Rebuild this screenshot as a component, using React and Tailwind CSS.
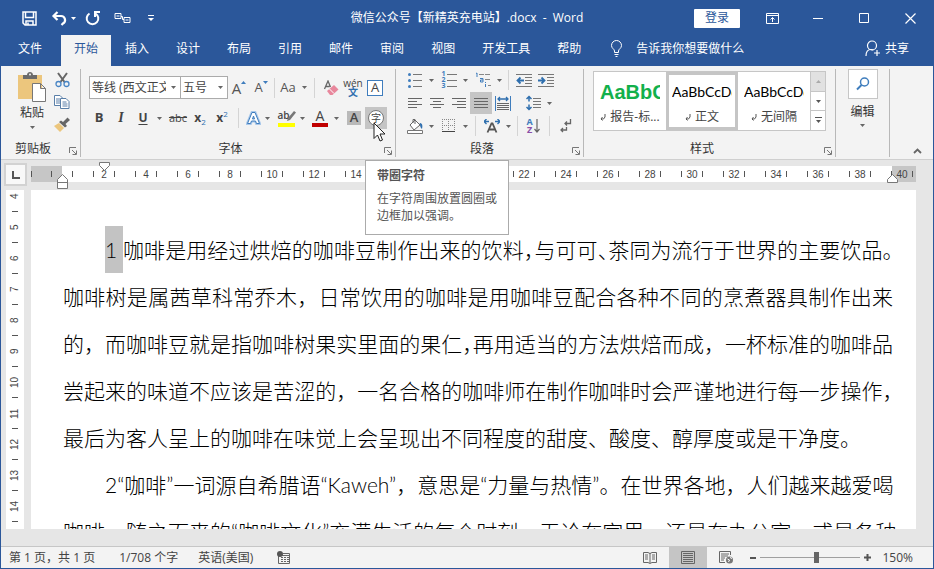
import React, { useState } from 'react';

const tabs = ['插入', '设计', '布局', '引用', '邮件', '审阅', '视图', '开发工具', '帮助'];
const rulerMarks = Array.from({ length: 21 }, (_, i) => i * 2);
const verticalMarks = [4, 5, 6, 7, 8, 9, 10, 11, 12, 13, 14];

const Svg = ({ w = 16, h = 16, children, className = '' }) => (
  <svg width={w} height={h} viewBox={`0 0 ${w} ${h}`} fill="none" className={`shrink-0 ${className}`} aria-hidden="true">
    {children}
  </svg>
);

const Caret = ({ label }) => (
  <button aria-label={label} className="flex h-[22px] w-[10px] shrink-0 items-center justify-center">
    <Svg w={5} h={3}><path d="M0 0h5L2.5 3z" fill="#666" /></Svg>
  </button>
);

const Tool = ({ label, children, active, className = 'w-[22px]' }) => (
  <button
    aria-label={label}
    className={`flex h-[22px] shrink-0 items-center justify-center ${className} ${active ? 'bg-[#c5c5c5]' : ''}`}
  >
    {children}
  </button>
);

const Divider = ({ className = 'mx-[5px]' }) => <div className={`h-[20px] w-px shrink-0 bg-[#d4d4d4] ${className}`} />;

const Group = ({ title, className = '', children, launcher = true }) => (
  <section aria-label={title} className={`flex h-[88px] shrink-0 flex-col border-r border-[#b8b8b8] ${className}`}>
    <div className="flex-1">{children}</div>
    <div className="flex h-[16px] items-center">
      <span className="flex-1 text-center leading-4">{launcher ? title : ''}</span>
      {launcher && (
        <button aria-label={`${title}设置`} className="flex w-[15px] justify-center pt-1">
          <Svg w={8} h={8}>
            <path d="M.5 6V.5H7M3 3l4 4M7.5 3.5v4h-4" stroke="#777" />
          </Svg>
        </button>
      )}
    </div>
  </section>
);

const Lines = ({ d }) => <Svg w={16} h={14}><path d={d} stroke="#666" /></Svg>;

const TitleBar = () => (
  <header className="flex h-[34px] shrink-0 items-center text-white">
    <div className="flex flex-1 basis-0 items-center">
      <button aria-label="保存" className="ml-[21px]">
        <Svg w={15} h={15}>
          <path d="M1 1h13v13H3l-2-2zM3.500 1v5.500h8V1M4 14v-4h7v4M6 14v-2.500" stroke="#fff" strokeWidth="1.500" />
        </Svg>
      </button>
      <button aria-label="撤消" className="ml-[14px]">
        <Svg w={17} h={15}>
          <path d="M6.500 1L2.500 5l4 4M3 5h7a4 4 0 0 1 2 7.500L10.500 14" stroke="#fff" strokeWidth="2.200" />
        </Svg>
      </button>
      <Svg w={5} h={3} className="ml-[3px]"><path d="M0 0h5L2.500 3z" fill="#fff" /></Svg>
      <button aria-label="恢复" className="ml-[9px]">
        <Svg w={16} h={16}>
          <path d="M4.500 3.500a5.800 5.800 0 1 0 6 0M10 7V2h5" stroke="#fff" strokeWidth="2" />
        </Svg>
      </button>
      <button aria-label="链接文本框" className="ml-[13px]">
        <Svg w={17} h={12}>
          <path d="M1 1.500h6v5H1zM2.500 4h3M10 5.500h6v5h-6zM11.500 8h3M7 4.500h1.500v3H10" stroke="#fff" />
        </Svg>
      </button>
      <button aria-label="自定义快速访问工具栏" className="ml-[17px]">
        <Svg w={6} h={7}><path d="M0 .5h6" stroke="#fff" /><path d="M0 3h6L3 6z" fill="#fff" /></Svg>
      </button>
    </div>
    <h1 className="whitespace-pre text-xs">微信公众号【新精英充电站】.docx  -  Word</h1>
    <div className="flex flex-1 basis-0 items-center justify-end">
      <button className="mr-[9px] h-[19px] w-[46px] rounded-[1px] bg-white text-xs leading-[18px] text-[#2b579a]">登录</button>
      <button aria-label="功能区显示选项" className="flex w-[46px] justify-center">
        <Svg w={13} h={11}><path d="M.5.5h12v10H.500zM.500 2.500h12M6.500 9V4.500M4.500 6.500l2-2 2 2" stroke="#fff" /></Svg>
      </button>
      <button aria-label="最小化" className="flex w-[46px] justify-center">
        <Svg w={10} h={10}><path d="M0 5.500h10" stroke="#fff" /></Svg>
      </button>
      <button aria-label="最大化" className="flex w-[46px] justify-center">
        <Svg w={10} h={10}><path d="M.5.5h9v9h-9z" stroke="#fff" /></Svg>
      </button>
      <button aria-label="关闭" className="flex w-[46px] justify-center">
        <Svg w={11} h={11}><path d="M.5.5l10 10M10.500.5l-10 10" stroke="#fff" strokeWidth="1.200" /></Svg>
      </button>
    </div>
  </header>
);

const TabBar = () => (
  <nav className="flex h-[31px] shrink-0 items-stretch gap-px text-xs text-white">
    <button className="ml-1 px-[13px] pb-1">文件</button>
    <button className="ml-[5px] bg-[#f3f3f3] px-[13px] pb-1 text-[#2b579a]">开始</button>
    {tabs.map((tab) => (
      <button key={tab} className="px-[13px] pb-1">{tab}</button>
    ))}
    <button className="ml-[15px] flex items-center gap-[13px] pb-1">
      <Svg w={13} h={17}>
        <path d="M4.500 12.500V11C4.500 9 1.500 8.500 1.500 5.500a5 5 0 0 1 10 0C11.500 8.500 8.500 9 8.500 11v1.500zM4.500 14.500h4M5.500 16.500h2" stroke="#fff" />
      </Svg>
      告诉我你想要做什么
    </button>
    <button className="ml-auto mr-[24px] flex items-center gap-1 pb-1">
      <Svg w={16} h={17}>
        <path d="M1 16c0-4 2-6.500 5-6.500 1 0 2 .2 2.500.6" stroke="#fff" strokeWidth="1.200" />
        <circle cx="7" cy="5.500" r="4.500" stroke="#fff" strokeWidth="1.200" />
        <path d="M12 10v6M9 13h6" stroke="#fff" strokeWidth="1.200" />
      </Svg>
      共享
    </button>
  </nav>
);

const ClipboardGroup = () => (
  <Group title="剪贴板" className="w-[80px]">
    <div className="flex">
      <button className="ml-[16px] flex w-[30px] flex-col items-center pt-[3px] leading-4">
        <Svg w={28} h={30}>
          <path d="M0 3h24v24H0z" fill="#ecc67d" />
          <path d="M5 7V3h4c0-4 6-4 6 0h4v4z" fill="#6a6a6a" />
          <circle cx="12" cy="2.500" r="1" fill="#f3f3f3" />
          <path d="M14.500 11.500h8l5 5v13h-13zM22.500 11.500v5h5" fill="#fff" stroke="#777" />
        </Svg>
        <span className="mt-[3px]">粘贴</span>
        <Svg w={5} h={3} className="mt-[5px]"><path d="M0 0h5L2.500 3z" fill="#666" /></Svg>
      </button>
      <div className="ml-[4px] flex flex-col">
        <Tool label="剪切">
          <Svg w={15} h={16}>
            <path d="M3 1l6.500 9M12 1L5.500 10" stroke="#666" strokeWidth="2" />
            <circle cx="3.500" cy="12" r="2.500" stroke="#4a86c5" strokeWidth="1.300" />
            <circle cx="11.500" cy="12" r="2.500" stroke="#4a86c5" strokeWidth="1.300" />
          </Svg>
        </Tool>
        <Tool label="复制">
          <Svg w={16} h={14}>
            <path d="M.5.5H6L8.500 3v7.500h-8zM2 4h4M2 6h4M2 8h4" fill="#fff" stroke="#5a7fa8" />
            <path d="M6.500 3.500H12L15 6.500v7H6.500zM8.500 7h4M8.500 9h5M8.500 11h5" fill="#fff" stroke="#5a7fa8" />
          </Svg>
        </Tool>
        <Tool label="格式刷">
          <Svg w={16} h={15}>
            <path d="M0 9l5-3 5 5-4 4z" fill="#ecc67d" />
            <path d="M5 5l2-1.500L9 5l4.500-4.500L16 3l-4.500 4 1.500 2-2 1.500z" fill="#666" />
          </Svg>
        </Tool>
      </div>
    </div>
  </Group>
);

const FontGroup = () => (
  <Group title="字体" className="w-[315px]">
    <div className="flex items-center pl-2 pt-[7px]">
      <div className="relative">
        <select aria-label="字体名称" className="block h-[23px] w-[92px] appearance-none border border-[#ababab] bg-white pl-[2px] pr-[14px] text-xs text-[#444]">
          <option>等线 (西文正文)</option>
        </select>
        <Svg w={5} h={3} className="pointer-events-none absolute right-[5px] top-[10px]"><path d="M0 0h5L2.500 3z" fill="#666" /></Svg>
      </div>
      <div className="relative -ml-px">
        <select aria-label="字号" className="block h-[23px] w-[48px] appearance-none border border-[#ababab] bg-white pl-[2px] text-xs text-[#444]">
          <option>五号</option>
        </select>
        <Svg w={5} h={3} className="pointer-events-none absolute right-[5px] top-[10px]"><path d="M0 0h5L2.500 3z" fill="#666" /></Svg>
      </div>
      <Tool label="增大字号">
        <span className="text-[15px] font-medium text-[#555]">A</span>
        <Svg w={5} h={3} className="mb-[10px]"><path d="M0 3h5L2.500 0z" fill="#3f7dbd" /></Svg>
      </Tool>
      <Tool label="减小字号">
        <span className="text-[13px] font-medium text-[#555]">A</span>
        <Svg w={5} h={3} className="mb-[10px]"><path d="M0 0h5L2.500 3z" fill="#3f7dbd" /></Svg>
      </Tool>
      <Divider className="mx-0.5" />
      <Tool label="更改大小写"><span className="text-[13px] font-medium text-[#555]">Aa</span></Tool>
      <Caret label="大小写选项" />
      <Divider />
      <Tool label="清除所有格式">
        <Svg w={16} h={16}>
          <path d="M1.500 9L5 1l2.500 6M2.500 6.500h4" stroke="#666" strokeWidth="1.300" />
          <path d="M4 11l7-6 4.500 4.500-6 5.500H7z" fill="#e8879c" />
          <path d="M6.500 9l4.500 4.500" stroke="#fff" />
        </Svg>
      </Tool>
      <Tool label="拼音指南">
        <span className="flex flex-col items-center text-[10px] leading-[9px] text-[#444]">
          <span>wén</span>
          <span className="font-bold text-[#2f6fae]">文</span>
        </span>
      </Tool>
      <Tool label="字符边框">
        <span className="flex size-4 items-center justify-center border border-[#3f7dbd] bg-white text-[13px] font-medium text-[#444]">A</span>
      </Tool>
    </div>
    <div className="flex items-center pl-[7px] pt-[8px] text-[#444]">
      <Tool label="加粗"><b className="text-[13px]">B</b></Tool>
      <Tool label="倾斜"><i className="font-['Liberation_Serif'] text-sm font-bold">I</i></Tool>
      <Tool label="下划线"><span className="text-[12px] font-bold underline underline-offset-2">U</span></Tool>
      <Caret label="下划线选项" />
      <Tool label="删除线" className="ml-[3px] w-[22px]"><span className="text-[11px] line-through">abc</span></Tool>
      <Tool label="下标">
        <b className="text-[12px]">x</b><span className="pt-2 text-[8px] text-[#2f6fae]">2</span>
      </Tool>
      <Tool label="上标">
        <b className="text-[12px]">x</b><span className="pb-2 text-[8px] text-[#2f6fae]">2</span>
      </Tool>
      <Divider />
      <Tool label="文本效果" className="w-[18px]">
        <Svg w={15} h={16}>
          <path d="M1.500 13.500L6 2.500h3l4.500 11h-3l-1-2.500h-4l-1 2.500zM6.500 9h2l-1-3z" fill="#fff" stroke="#a9c8ea" strokeWidth="3" />
          <path d="M1.500 13.500L6 2.500h3l4.500 11h-3l-1-2.500h-4l-1 2.500zM6.500 9h2l-1-3z" fill="#fff" stroke="#3f7dbd" />
        </Svg>
      </Tool>
      <Caret label="文本效果选项" />
      <Tool label="突出显示" className="ml-[3px] w-[22px]">
        <span className="flex h-[17px] w-[17px] flex-col">
          <span className="flex h-[13px] text-[10px] font-semibold leading-[10px]">
            ab
            <Svg w={10} h={12} className="-ml-1"><path d="M1 11l1-3 6-7 2 1.500L4 10z" fill="#777" /></Svg>
          </span>
          <span className="h-1 bg-[#ffff00]" />
        </span>
      </Tool>
      <Caret label="突出显示颜色" />
      <Tool label="字体颜色" className="ml-0.5 w-[22px]">
        <span className="flex w-4 flex-col items-center text-sm font-medium leading-[14px]">
          A<span className="h-1 w-4 bg-[#c00000]" />
        </span>
      </Tool>
      <Caret label="字体颜色选项" />
      <Tool label="字符底纹" className="ml-0.5 w-[22px]">
        <span className="flex size-[14px] items-center justify-center bg-[#b9b9b9] text-[13px] font-semibold">A</span>
      </Tool>
      <div className="relative">
        <Tool label="带圈字符" active>
          <span className="flex size-4 items-center justify-center rounded-full border border-[#777] bg-white text-[10px] leading-3">字</span>
        </Tool>
        <div role="tooltip" className="absolute left-0 top-[53px] z-10 w-[144px] border border-[#ababab] bg-white px-[11px] pb-[10px] pt-[6px] text-xs text-[#555]">
          <p className="mb-[5px] font-bold leading-[18px]">带圈字符</p>
          <p className="whitespace-nowrap leading-[17px]">在字符周围放置圆圈或<br />边框加以强调。</p>
        </div>
        <Svg w={13} h={20} className="absolute left-2 top-[15px] z-20">
          <path d="M1 1v15.500l3.500-3.500 2.500 6 2.500-1-2.500-6h5z" fill="#fff" stroke="#222" />
        </Svg>
      </div>
    </div>
  </Group>
);

const ParagraphGroup = () => (
  <Group title="段落" className="w-[188px]">
    <div className="flex flex-col gap-px pl-2">
      <div className="flex items-center">
        <Tool label="项目符号">
          <Svg w={14} h={15}>
            <path d="M5 1.500h9M5 7.500h9M5 13.500h9" stroke="#777" />
            <circle cx="1.500" cy="1.500" r="1.500" fill="#3f7dbd" /><circle cx="1.500" cy="7.500" r="1.500" fill="#3f7dbd" /><circle cx="1.500" cy="13.500" r="1.500" fill="#3f7dbd" />
          </Svg>
        </Tool>
        <Caret label="项目符号库" />
        <Tool label="编号" className="ml-0.5 w-[22px]">
          <span className="flex flex-col text-[7px] font-bold leading-[6px] text-[#3f7dbd]"><span>1</span><span>2</span><span>3</span></span>
          <Svg w={10} h={15} className="ml-px"><path d="M0 1.500h10M0 7.500h10M0 13.500h10" stroke="#777" /></Svg>
        </Tool>
        <Caret label="编号库" />
        <Tool label="多级列表" className="ml-0.5 w-[22px]">
          <Svg w={17} h={16}>
            <path d="M1 1.500l1-.5v4M5 6.500h3v3.500H5.500V8H8M10.500 12v3M10.500 10v1" stroke="#3f7dbd" />
            <path d="M4 2.500h11M10 7.500h6M13 13.500h3" stroke="#888" strokeDasharray="5 1" />
          </Svg>
        </Tool>
        <Caret label="列表库" />
        <Divider className="mx-[4px]" />
        <Tool label="减少缩进量">
          <Svg w={16} h={13}>
            <path d="M0 .5h16M9 3.500h7M9 6.500h7M9 9.500h7M0 12.500h16" stroke="#777" />
            <path d="M8 6.500H2M4.500 3.500l-3 3 3 3" stroke="#2f6fae" strokeWidth="1.800" />
          </Svg>
        </Tool>
        <Tool label="增加缩进量">
          <Svg w={16} h={13}>
            <path d="M0 .5h16M9 3.500h7M9 6.500h7M9 9.500h7M0 12.500h16" stroke="#777" />
            <path d="M0 6.500h6M3.500 3.500l3 3-3 3" stroke="#2f6fae" strokeWidth="1.800" />
          </Svg>
        </Tool>
      </div>
      <div className="flex items-center">
        <Tool label="左对齐"><Lines d="M1 2.500h14M1 5.500h9M1 8.500h14M1 11.500h9" /></Tool>
        <Tool label="居中"><Lines d="M1 2.500h14M4 5.500h8M1 8.500h14M4 11.500h8" /></Tool>
        <Tool label="右对齐"><Lines d="M1 2.500h14M6 5.500h9M1 8.500h14M6 11.500h9" /></Tool>
        <Tool label="两端对齐" active><Lines d="M1 2.500h14M1 5.500h14M1 8.500h14M1 11.500h14" /></Tool>
        <Tool label="分散对齐">
          <Svg w={16} h={15}>
            <path d="M.5 0v15M15.500 0v15" stroke="#3f7dbd" />
            <path d="M3 3h10M5 1L3 3l2 2M11 1l2 2-2 2" stroke="#2f6fae" strokeWidth="1.300" />
            <path d="M2 7.500h12M2 9.500h12M2 11.500h12M2 13.500h12" stroke="#666" />
          </Svg>
        </Tool>
        <Tool label="行距" className="ml-2 w-[22px]">
          <Svg w={15} h={16}>
            <path d="M3 1v5.500M3 9.500V15M.5 4L3 1.500 5.500 4M.5 12L3 14.500 5.500 12" stroke="#2f6fae" strokeWidth="1.500" />
            <path d="M7 3.500h8M7 6.500h8M7 9.500h8M7 12.500h8" stroke="#777" />
          </Svg>
        </Tool>
        <Caret label="行距选项" />
      </div>
      <div className="flex items-center">
        <Tool label="底纹">
          <Svg w={17} h={16}>
            <path d="M8 2l5 5-6 5-4-5zM6 5V1.500h2V6" fill="#fff" stroke="#666" />
            <path d="M12.500 5c2.500 0 3.500 2 2.500 6-1.500-1-2-3-2-5z" fill="#2f6fae" />
            <path d="M.5 12.500h15v3H.5z" fill="#fff" stroke="#777" />
          </Svg>
        </Tool>
        <Caret label="底纹颜色" />
        <Tool label="边框" className="ml-0.5 w-[22px]">
          <Svg w={14} h={14}><path d="M.5 0v12.500M6.500 0v12.500M12.500 0v12.500M0 .5h13M0 6.500h13" stroke="#888" strokeDasharray="1 1" /><path d="M0 12.500h13" stroke="#444" /></Svg>
        </Tool>
        <Caret label="边框选项" />
        <Divider />
        <Tool label="中文版式">
          <Svg w={16} h={14}>
            <path d="M3.500 13.500l4-9h1l4 9M5 10.500h6" stroke="#555" strokeWidth="1.800" />
            <path d="M0 2.500h5M2.500 0L0 2.500 2.500 5M11 2.500h5M13.500 0L16 2.500 13.500 5" stroke="#2f6fae" strokeWidth="1.300" />
          </Svg>
        </Tool>
        <Caret label="中文版式选项" />
        <Divider className="mx-[4px]" />
        <Tool label="排序">
          <span className="flex flex-col text-[9px] font-bold leading-2 text-[#3f7dbd]"><span>A</span><span className="text-[#8a4fa8]">Z</span></span>
          <Svg w={6} h={14} className="ml-px"><path d="M3 0v13M.5 10L3 13l2.500-3" stroke="#666" strokeWidth="1.200" /></Svg>
        </Tool>
        <Divider />
        <Tool label="显示编辑标记">
          <Svg w={13} h={14}>
            <path d="M10.500 0v4.500H5M7 2.500L5 4.500l2 2M6.500 8v3H1M3 9l-2 2 2 2" stroke="#666" strokeWidth="1.300" />
          </Svg>
        </Tool>
      </div>
    </div>
  </Group>
);

const StyleCard = ({ name, selected, children }) => (
  <button
    aria-pressed={selected}
    className={`flex h-full min-w-0 flex-1 flex-col items-center overflow-hidden border-[3px] px-[3px] text-[#444] ${selected ? 'border-[#c5c5c5]' : 'border-transparent'}`}
  >
    <span className="flex h-[34px] w-full items-center overflow-hidden whitespace-nowrap">{children}</span>
    <span className="flex items-center gap-1 whitespace-nowrap leading-4">
      <Svg w={6} h={7}><path d="M5 0v3L3.500 5H1M2.500 3L1 5l1.500 1.500" stroke="#555" /></Svg>
      {name}
    </span>
  </button>
);

const StylesGroup = () => (
  <Group title="样式" className="w-[252px]">
    <div className="pl-[9px] pr-[9px] pt-[2px]">
      <div className="flex h-[60px] border border-[#c6c6c6] bg-white">
        <StyleCard name="报告-标...">
          <span className="font-['Liberation_Sans'] text-xl font-bold text-[#12b04c]">AaBbC</span>
        </StyleCard>
        <StyleCard name="正文" selected><span className="font-['Lato'] text-[14px] text-black">AaBbCcDd</span></StyleCard>
        <StyleCard name="无间隔"><span className="font-['Lato'] text-[14px] text-black">AaBbCcDd</span></StyleCard>
        <div className="flex w-[15px] flex-col divide-y divide-[#c6c6c6] border-l border-[#c6c6c6]">
          <button aria-label="上一行" className="flex flex-1 items-center justify-center bg-[#e1e1e1]">
            <Svg w={5} h={3}><path d="M0 3h5L2.500 0z" fill="#aaa" /></Svg>
          </button>
          <button aria-label="下一行" className="flex flex-1 items-center justify-center">
            <Svg w={5} h={3}><path d="M0 0h5L2.500 3z" fill="#555" /></Svg>
          </button>
          <button aria-label="其他样式" className="flex flex-1 items-center justify-center">
            <Svg w={7} h={7}><path d="M0 .5h7" stroke="#555" /><path d="M1 3h5L3.500 6z" fill="#555" /></Svg>
          </button>
        </div>
      </div>
    </div>
  </Group>
);

const Ribbon = () => (
  <div className="flex h-[94px] shrink-0 border-b border-[#cfcfcf] bg-[#f3f3f3] pt-[3px] text-xs text-[#333]">
    <ClipboardGroup />
    <FontGroup />
    <ParagraphGroup />
    <StylesGroup />
    <Group title="编辑" className="w-[54px]" launcher={false}>
      <button className="mx-auto flex flex-col items-center leading-4">
        <span className="flex size-[30px] items-center justify-center border border-[#c6c6c6] bg-white">
          <Svg w={14} h={14}>
            <circle cx="8.500" cy="5" r="4" stroke="#3f7dbd" strokeWidth="1.500" />
            <path d="M5.500 8L1 12.500" stroke="#3f7dbd" strokeWidth="2" />
          </Svg>
        </span>
        <span className="mt-[5px]">编辑</span>
        <Svg w={5} h={3} className="mt-1"><path d="M0 0h5L2.500 3z" fill="#666" /></Svg>
      </button>
    </Group>
    <button aria-label="折叠功能区" className="ml-auto mr-[11px] self-end pb-[5px]">
      <Svg w={9} h={6}><path d="M1 5l3.500-3.500L8 5" stroke="#666" strokeWidth="1.800" /></Svg>
    </button>
  </div>
);

const Tick = () => <span className="h-[6px] w-px bg-[#555]" />;

const Ruler = () => (
  <div className="flex h-[30px] shrink-0 bg-[#e6e6e6] font-['Liberation_Sans'] text-[10px] text-[#444]">
    <button aria-label="制表符" className="ml-[3px] mt-[3px] flex size-[23px] items-center justify-center border-2 border-[#d2d2d2] bg-[#f8f8f8]">
      <Svg w={8} h={8}><path d="M1 0v7h7" stroke="#555" strokeWidth="2" /></Svg>
    </button>
    <div className="relative ml-1 mr-[17px] mt-[6px] h-4 min-w-0 flex-1">
      <div className="flex h-4 overflow-hidden bg-[linear-gradient(90deg,#c6c6c6_31px,#fff_31px,#fff_calc(100%-24px),#c6c6c6_calc(100%-24px))]">
        <span className="flex w-[10px] shrink-0 items-center"><Tick /></span>
        {rulerMarks.map((n) => (
          <span key={n} className="flex w-[42px] shrink-0 items-center justify-between px-[10px]">
            <Tick />
            <span>{n || ''}</span>
            <Tick />
          </span>
        ))}
      </div>
      {/* indent handles */}
      <Svg w={11} h={9} className="absolute -top-1 left-[68px]"><path d="M.5.5h10v3L5.500 8.500l-5-5z" fill="#fff" stroke="#777" /></Svg>
      <Svg w={11} h={15} className="absolute left-[26px] top-2"><path d="M.5 14.500v-9L5.500.5l5 5v9zM.5 8.500h10" fill="#fff" stroke="#777" /></Svg>
      <Svg w={11} h={9} className="absolute right-[18px] top-2"><path d="M.5 8.500v-3L5.500.5l5 5v3z" fill="#fff" stroke="#777" /></Svg>
    </div>
  </div>
);

// half-width punctuation, used where a line is too full
const Half = ({ children }) => <span className="[font-feature-settings:'halt']">{children}</span>;

const Line = ({ children, indent, last }) => (
  <span className={`block h-[47px] whitespace-nowrap ${last ? '' : '[text-align-last:justify]'} ${indent ? 'pl-[42px]' : ''}`}>
    {children}
  </span>
);

const Document = () => (
  <main className="flex min-h-0 flex-1 bg-[#e6e6e6] pb-[17px]">
    <div className="ml-[5px] w-[18px] shrink-0 overflow-hidden bg-white font-['Liberation_Sans'] text-[10px] text-[#444]">
      {verticalMarks.map((n) => (
        <div key={n} className="flex h-[31px] flex-col items-center">
          <span className="flex h-[13px] rotate-180 items-center justify-center leading-3 [writing-mode:vertical-rl]">{n}</span>
          <span className="mt-2 h-px w-[6px] bg-[#555]" />
        </div>
      ))}
    </div>
    <article
      lang="zh-CN"
      className="ml-[7px] mr-[17px] min-w-0 flex-1 overflow-hidden bg-white pl-[32px] pr-[23px] pt-[36px] font-['Lato','Noto_Sans_CJK_SC',sans-serif] text-[21px] font-light leading-[47px] text-black"
    >
      <p>
        <Line indent>
          <span className="inline-block whitespace-pre bg-[#c3c3c3]">{'1 '}</span>咖啡是用经过烘焙的咖啡豆制作出来的饮料<Half>，</Half>与可可<Half>、</Half>茶同为流行于世界的主要饮品<Half>。</Half>
        </Line>
        <Line>咖啡树是属茜草科常乔木，日常饮用的咖啡是用咖啡豆配合各种不同的烹煮器具制作出来</Line>
        <Line>的，而咖啡豆就是指咖啡树果实里面的果仁<Half>，</Half>再用适当的方法烘焙而成，一杯标准的咖啡品</Line>
        <Line>尝起来的味道不应该是苦涩的，一名合格的咖啡师在制作咖啡时会严谨地进行每一步操作<Half>，</Half></Line>
        <Line last>最后为客人呈上的咖啡在味觉上会呈现出不同程度的甜度、酸度、醇厚度或是干净度。</Line>
      </p>
      <p>
        <Line indent>2“咖啡”一词源自希腊语“Kaweh”，意思是“力量与热情”。在世界各地，人们越来越爱喝</Line>
        <Line>咖啡，随之而来的“咖啡文化”充满生活的每个时刻。无论在家里，还是在办公室，或是各种</Line>
      </p>
    </article>
  </main>
);

const StatusBar = () => {
  const [zoom, setZoom] = useState(56);

  return (
    <footer className="flex h-[22px] shrink-0 items-center border-t border-[#c6c6c6] bg-[#f3f3f3] text-xs leading-4 text-[#444]">
      <span className="ml-2">第 1 页，共 1 页</span>
      <span className="ml-6">1/708 个字</span>
      <span className="ml-5">英语(美国)</span>
      <button aria-label="宏录制" className="ml-6">
        <Svg w={13} h={13}>
          <path d="M1.500 5v7.500h11v-10H6" stroke="#666" />
          <path d="M5 4.500h8M4 6.500h2M7 6.500h2M10 6.500h2M4 8.500h2M7 8.500h2M10 8.500h2M4 10.500h2M7 10.500h2M10 10.500h2" stroke="#666" />
          <circle cx="3" cy="3" r="3" fill="#555" />
        </Svg>
      </button>
      <div className="ml-auto flex items-center self-stretch">
        <button aria-label="阅读视图" className="flex w-[38px] justify-center">
          <Svg w={14} h={13}>
            <path d="M.5 1.500H5l2 1 2-1h4.500v10H9l-2 1-2-1H.500zM7 2v10M2 4h3M2 6h3M2 8h3M9 4h3M9 6h3M9 8h3" stroke="#666" />
          </Svg>
        </button>
        <button aria-label="页面视图" aria-pressed="true" className="flex w-[38px] items-center justify-center self-stretch bg-[#c5c5c5]">
          <Svg w={14} h={13}><path d="M.5.5h13v12H.500zM2 2.500h10M2 4.500h10M2 6.500h10M2 8.500h10M2 10.500h10" stroke="#666" /></Svg>
        </button>
        <button aria-label="Web 版式视图" className="flex w-[38px] justify-center">
          <Svg w={15} h={13}>
            <path d="M11.500 4V.500H.5v11H6M2 3h8M2 5h7M2 7h4M2 9h3" stroke="#666" />
            <circle cx="10.500" cy="9" r="3.500" fill="#777" />
            <path d="M8.500 8l2 1-1 2M11.500 6l1 2" stroke="#fff" />
          </Svg>
        </button>
        <button aria-label="缩小" className="ml-[4px] flex w-2 justify-center"><Svg w={6} h={6}><path d="M0 3h6" stroke="#555" strokeWidth="2" /></Svg></button>
        <input
          type="range"
          aria-label="缩放"
          min="0"
          max="100"
          value={zoom}
          onChange={(e) => setZoom(Number(e.target.value))}
          className="mx-[3px] h-4 w-[100px] appearance-none bg-transparent [&::-webkit-slider-runnable-track]:h-[11px] [&::-webkit-slider-runnable-track]:bg-[linear-gradient(#a0a0a0,#a0a0a0)] [&::-webkit-slider-runnable-track]:bg-[length:100%_1px] [&::-webkit-slider-runnable-track]:bg-center [&::-webkit-slider-runnable-track]:bg-no-repeat [&::-webkit-slider-thumb]:h-[11px] [&::-webkit-slider-thumb]:w-[5px] [&::-webkit-slider-thumb]:appearance-none [&::-webkit-slider-thumb]:bg-[#666]"
        />
        <button aria-label="放大" className="flex w-2 justify-center"><Svg w={7} h={7}><path d="M0 3.500h7M3.500 0v7" stroke="#555" strokeWidth="2" /></Svg></button>
        <span className="ml-[11px] mr-[20px]">150%</span>
      </div>
    </footer>
  );
};

const App = () => (
  <div className="flex h-screen flex-col overflow-hidden border border-[#2b579a] bg-[#2b579a] font-['Open_Sans','Noto_Sans_CJK_SC',sans-serif]">
    <TitleBar />
    <TabBar />
    <Ribbon />
    <Ruler />
    <Document />
    <StatusBar />
  </div>
);

export default App;
